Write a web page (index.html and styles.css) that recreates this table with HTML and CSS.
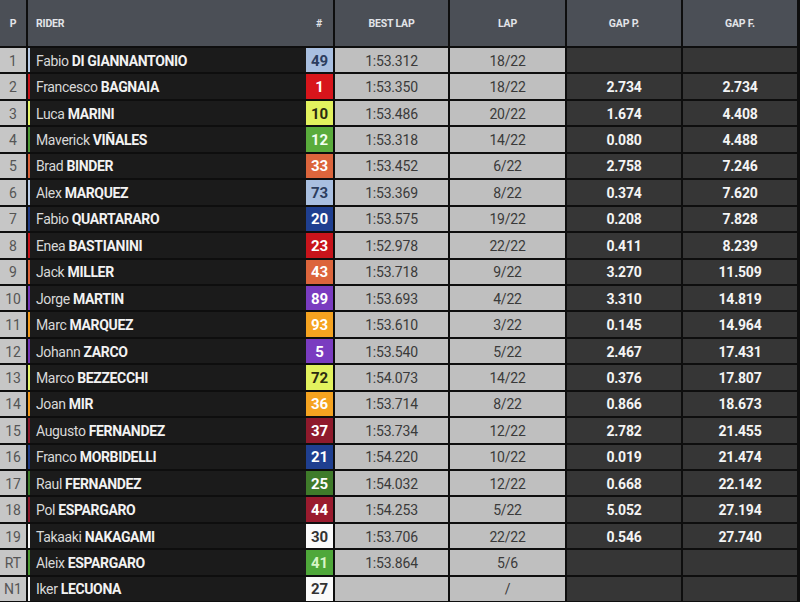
FILE: index.html
```html
<!DOCTYPE html>
<html>
<head>
<meta charset="utf-8">
<link rel="stylesheet" href="styles.css">
</head>
<body>
<div class="table">
  <div class="head">
    <div class="h h-p">P</div>
    <div class="h h-rider"><span>RIDER</span><span>#</span></div>
    <div class="h">BEST LAP</div>
    <div class="h">LAP</div>
    <div class="h">GAP P.</div>
    <div class="h">GAP F.</div>
  </div>

  <div class="row"><div class="pos">1</div><div class="rider c-vr46"><span class="name">Fabio <b>DI GIANNANTONIO</b></span><span class="num n-vr46">49</span></div><div class="lt">1:53.312</div><div class="lt">18/22</div><div class="gp"></div><div class="gp"></div></div>
  <div class="row"><div class="pos">2</div><div class="rider c-duc"><span class="name">Francesco <b>BAGNAIA</b></span><span class="num n-duc">1</span></div><div class="lt">1:53.350</div><div class="lt">18/22</div><div class="gp">2.734</div><div class="gp">2.734</div></div>
  <div class="row"><div class="pos">3</div><div class="rider c-yel"><span class="name">Luca <b>MARINI</b></span><span class="num n-yel">10</span></div><div class="lt">1:53.486</div><div class="lt">20/22</div><div class="gp">1.674</div><div class="gp">4.408</div></div>
  <div class="row"><div class="pos">4</div><div class="rider c-apr"><span class="name">Maverick <b>VIÑALES</b></span><span class="num n-apr">12</span></div><div class="lt">1:53.318</div><div class="lt">14/22</div><div class="gp">0.080</div><div class="gp">4.488</div></div>
  <div class="row"><div class="pos">5</div><div class="rider c-ktm"><span class="name">Brad <b>BINDER</b></span><span class="num n-ktm">33</span></div><div class="lt">1:53.452</div><div class="lt">6/22</div><div class="gp">2.758</div><div class="gp">7.246</div></div>
  <div class="row"><div class="pos">6</div><div class="rider c-vr46"><span class="name">Alex <b>MARQUEZ</b></span><span class="num n-vr46">73</span></div><div class="lt">1:53.369</div><div class="lt">8/22</div><div class="gp">0.374</div><div class="gp">7.620</div></div>
  <div class="row"><div class="pos">7</div><div class="rider c-yam"><span class="name">Fabio <b>QUARTARARO</b></span><span class="num n-yam">20</span></div><div class="lt">1:53.575</div><div class="lt">19/22</div><div class="gp">0.208</div><div class="gp">7.828</div></div>
  <div class="row"><div class="pos">8</div><div class="rider c-duc"><span class="name">Enea <b>BASTIANINI</b></span><span class="num n-duc2">23</span></div><div class="lt">1:52.978</div><div class="lt">22/22</div><div class="gp">0.411</div><div class="gp">8.239</div></div>
  <div class="row"><div class="pos">9</div><div class="rider c-ktm"><span class="name">Jack <b>MILLER</b></span><span class="num n-ktm">43</span></div><div class="lt">1:53.718</div><div class="lt">9/22</div><div class="gp">3.270</div><div class="gp">11.509</div></div>
  <div class="row"><div class="pos">10</div><div class="rider c-pra"><span class="name">Jorge <b>MARTIN</b></span><span class="num n-pra">89</span></div><div class="lt">1:53.693</div><div class="lt">4/22</div><div class="gp">3.310</div><div class="gp">14.819</div></div>
  <div class="row"><div class="pos">11</div><div class="rider c-hon"><span class="name">Marc <b>MARQUEZ</b></span><span class="num n-hon">93</span></div><div class="lt">1:53.610</div><div class="lt">3/22</div><div class="gp">0.145</div><div class="gp">14.964</div></div>
  <div class="row"><div class="pos">12</div><div class="rider c-pra"><span class="name">Johann <b>ZARCO</b></span><span class="num n-pra">5</span></div><div class="lt">1:53.540</div><div class="lt">5/22</div><div class="gp">2.467</div><div class="gp">17.431</div></div>
  <div class="row"><div class="pos">13</div><div class="rider c-yel"><span class="name">Marco <b>BEZZECCHI</b></span><span class="num n-yel">72</span></div><div class="lt">1:54.073</div><div class="lt">14/22</div><div class="gp">0.376</div><div class="gp">17.807</div></div>
  <div class="row"><div class="pos">14</div><div class="rider c-hon"><span class="name">Joan <b>MIR</b></span><span class="num n-hon">36</span></div><div class="lt">1:53.714</div><div class="lt">8/22</div><div class="gp">0.866</div><div class="gp">18.673</div></div>
  <div class="row"><div class="pos">15</div><div class="rider c-gas"><span class="name">Augusto <b>FERNANDEZ</b></span><span class="num n-gas">37</span></div><div class="lt">1:53.734</div><div class="lt">12/22</div><div class="gp">2.782</div><div class="gp">21.455</div></div>
  <div class="row"><div class="pos">16</div><div class="rider c-yam"><span class="name">Franco <b>MORBIDELLI</b></span><span class="num n-yam">21</span></div><div class="lt">1:54.220</div><div class="lt">10/22</div><div class="gp">0.019</div><div class="gp">21.474</div></div>
  <div class="row"><div class="pos">17</div><div class="rider c-rnf"><span class="name">Raul <b>FERNANDEZ</b></span><span class="num n-rnf">25</span></div><div class="lt">1:54.032</div><div class="lt">12/22</div><div class="gp">0.668</div><div class="gp">22.142</div></div>
  <div class="row"><div class="pos">18</div><div class="rider c-gas"><span class="name">Pol <b>ESPARGARO</b></span><span class="num n-gas2">44</span></div><div class="lt">1:54.253</div><div class="lt">5/22</div><div class="gp">5.052</div><div class="gp">27.194</div></div>
  <div class="row"><div class="pos">19</div><div class="rider c-wht"><span class="name">Takaaki <b>NAKAGAMI</b></span><span class="num n-wht">30</span></div><div class="lt">1:53.706</div><div class="lt">22/22</div><div class="gp">0.546</div><div class="gp">27.740</div></div>
  <div class="row"><div class="pos">RT</div><div class="rider c-apr"><span class="name">Aleix <b>ESPARGARO</b></span><span class="num n-apr2">41</span></div><div class="lt">1:53.864</div><div class="lt">5/6</div><div class="gp"></div><div class="gp"></div></div>
  <div class="row"><div class="pos">N1</div><div class="rider c-wht"><span class="name">Iker <b>LECUONA</b></span><span class="num n-wht">27</span></div><div class="lt"></div><div class="lt">/</div><div class="gp"></div><div class="gp"></div></div>
</div>
</body>
</html>
```

FILE: styles.css
```css
html, body {
  margin: 0;
  padding: 0;
  background: #0e0e0e;
  width: 800px;
  height: 602px;
  overflow: hidden;
}

.table {
  font-family: "Roboto", "Liberation Sans", sans-serif;
  display: flex;
  flex-direction: column;
  gap: 2px;
}

.head,
.row {
  display: grid;
  grid-template-columns: 26px 305px 113px 115px 114px 114px;
  column-gap: 2px;
}

.head {
  height: 46px;
}

.row {
  height: 24.45px;
}

.h {
  background: #4b4f56;
  color: #e2e4e8;
  font-weight: bold;
  font-size: 10.5px;
  letter-spacing: -0.2px;
  display: flex;
  align-items: center;
  justify-content: center;
}

.h-rider {
  justify-content: space-between;
  padding: 0 11px 0 8px;
}

.pos {
  background: #c6c6c6;
  color: #555;
  font-size: 14px;
  padding-top: 1px;
  display: flex;
  align-items: center;
  justify-content: center;
}

.rider {
  background: #1b1b1b;
  border-left: 2px solid #999;
  display: flex;
  align-items: center;
  padding-left: 6px;
  font-size: 14px;
  letter-spacing: -0.35px;
}

.name {
  color: #d8d8d8;
  white-space: nowrap;
  padding-top: 1px;
}

.name b {
  color: #f2f2f2;
  font-weight: bold;
}

.num {
  margin-left: auto;
  width: 27px;
  height: 100%;
  display: flex;
  align-items: center;
  justify-content: center;
  font-weight: bold;
  font-size: 15px;
  letter-spacing: 0;
  padding-top: 1px;
  box-sizing: border-box;
  color: #fff;
}

.lt {
  background: #bfbfbf;
  color: #3a3a3a;
  font-size: 14px;
  letter-spacing: -0.2px;
  padding-top: 1px;
  display: flex;
  align-items: center;
  justify-content: center;
}

.gp {
  background: #363636;
  color: #f4f4f4;
  font-size: 14px;
  font-weight: bold;
  letter-spacing: -0.2px;
  padding-top: 1px;
  display: flex;
  align-items: center;
  justify-content: center;
}

/* team stripe colours */
.c-vr46 { border-left-color: #b8cbe6; }
.c-duc  { border-left-color: #c8141b; }
.c-yel  { border-left-color: #e4f36a; }
.c-apr  { border-left-color: #4f9a36; }
.c-ktm  { border-left-color: #d9623a; }
.c-yam  { border-left-color: #1f3b86; }
.c-pra  { border-left-color: #7436b8; }
.c-hon  { border-left-color: #f29b1e; }
.c-gas  { border-left-color: #8c1a2c; }
.c-rnf  { border-left-color: #3d7a2b; }
.c-wht  { border-left-color: #f4f4f4; }

/* number boxes */
.n-vr46 { background: #a9bfe0; color: #2c3d5e; }
.n-duc  { background: #d8151b; color: #fff; }
.n-duc2 { background: #c8141b; color: #fff; }
.n-yel  { background: #e2f25e; color: #2b2b10; }
.n-apr  { background: #5aac3c; color: #f3fff0; }
.n-apr2 { background: #4fa83a; color: #d8f5c8; }
.n-ktm  { background: #dc653c; color: #fff; }
.n-yam  { background: #1f3f90; color: #fff; }
.n-pra  { background: #7a3cc0; color: #fff; }
.n-hon  { background: #f5a320; color: #fff; }
.n-gas  { background: #8f1a2c; color: #fff; }
.n-gas2 { background: #9a1b2e; color: #fff; }
.n-rnf  { background: #3f7b2a; color: #fff; }
.n-wht  { background: #fafafa; color: #333; }
```
